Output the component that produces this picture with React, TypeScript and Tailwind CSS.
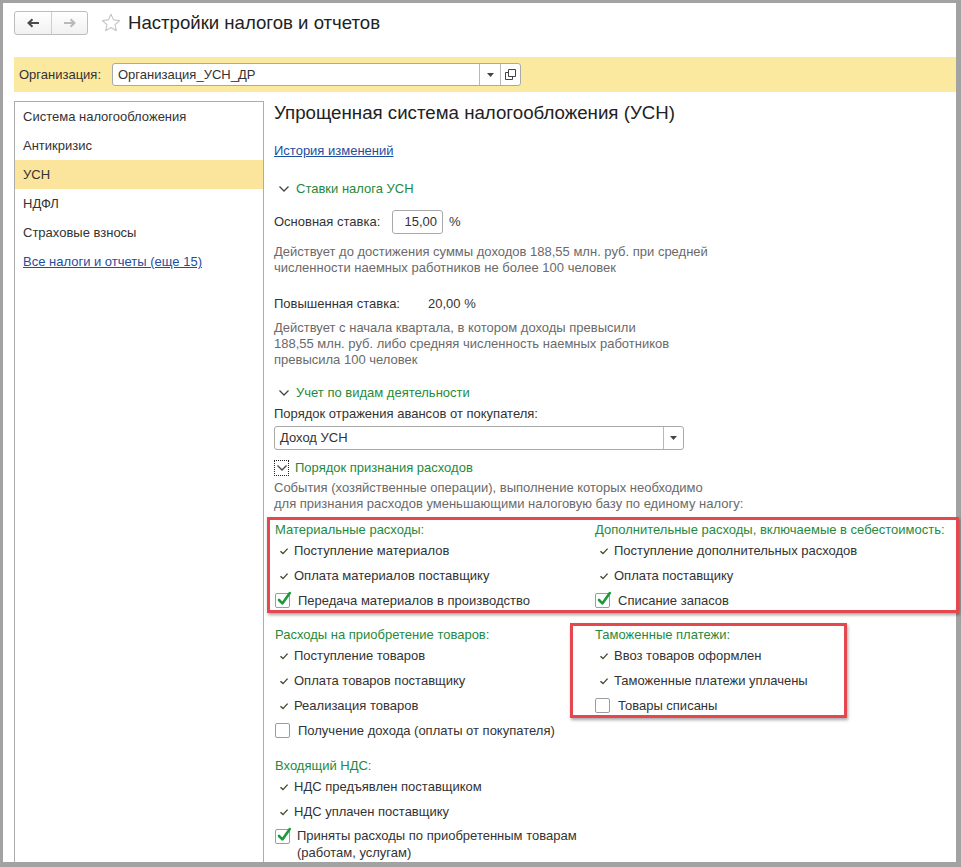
import React from 'react';

const green = 'text-[#1f8a3c]';

function Tick() {
  return (
    <svg width="10" height="8" viewBox="0 0 10 8" className="shrink-0">
      <path d="M1.5 4.2 L4 6.6 L8.6 1.6" fill="none" stroke="#474730" strokeWidth="1.4" />
    </svg>
  );
}

function Box({ checked }: { checked?: boolean }) {
  return (
    <span className="relative inline-block h-[15px] w-[15px] shrink-0 rounded-[2px] border border-[#9c9c9c] bg-white">
      {checked && (
        <svg className="absolute left-[1px] top-[-4px]" width="15" height="17" viewBox="0 0 15 17">
          <path d="M2 10 L5.4 13.4 L12.8 3" fill="none" stroke="#1c9a3b" strokeWidth="2.6" strokeLinecap="round" strokeLinejoin="round" />
        </svg>
      )}
    </span>
  );
}

function Chevron() {
  return (
    <svg width="12" height="8" viewBox="0 0 12 8" className="shrink-0">
      <path d="M1.5 1.5 L6 6 L10.5 1.5" fill="none" stroke="#3e4a3e" strokeWidth="1.3" />
    </svg>
  );
}

function TickRow({ text }: { text: string }) {
  return (
    <div className="flex h-[25px] items-center pl-[5px]">
      <Tick />
      <span className="ml-[5px]">{text}</span>
    </div>
  );
}

function BoxRow({ text, checked }: { text: string; checked?: boolean }) {
  return (
    <div className="flex h-[25px] items-center pl-[1px]">
      <Box checked={checked} />
      <span className="ml-[8px]">{text}</span>
    </div>
  );
}

function GroupHead({ text }: { text: string }) {
  return <div className={`h-[16px] pl-[1px] leading-[16px] ${green}`}>{text}</div>;
}

const menu = ['Система налогообложения', 'Антикризис', 'УСН', 'НДФЛ', 'Страховые взносы'];

export default function App() {
  return (
    <div className="relative h-[867px] w-[961px] bg-[#a2a2a2] pb-[5px] pl-[3px] pr-[5px] pt-[3px] font-['Liberation_Sans',Arial,sans-serif] text-[13px] text-[#333]">
      <div className="flex h-full flex-col overflow-hidden bg-white">
        {/* header */}
        <div className="flex h-[54px] shrink-0 items-start pl-[11px] pt-[8px]">
          <div className="flex h-[24px] overflow-hidden rounded-[3px] border border-[#bdbdbd] bg-gradient-to-b from-white to-[#f1f1f1]">
            <div className="flex w-[37px] items-center justify-center border-r border-[#cfcfcf]">
              <svg width="14" height="10" viewBox="0 0 14 10">
                <path d="M13 5 H3 M6.5 1.2 L2.5 5 L6.5 8.8" fill="none" stroke="#4b4b4b" strokeWidth="2" />
              </svg>
            </div>
            <div className="flex w-[35px] items-center justify-center">
              <svg width="14" height="10" viewBox="0 0 14 10">
                <path d="M1 5 H11 M7.5 1.2 L11.5 5 L7.5 8.8" fill="none" stroke="#b9b9b9" strokeWidth="2" />
              </svg>
            </div>
          </div>
          <svg className="ml-[12px] mt-[1px]" width="22" height="22" viewBox="0 0 24 24">
            <path
              d="M12 2.5 L14.8 8.6 L21.4 9.3 L16.4 13.8 L17.8 20.4 L12 17 L6.2 20.4 L7.6 13.8 L2.6 9.3 L9.2 8.6 Z"
              fill="none"
              stroke="#c4c4c4"
              strokeWidth="1.2"
              strokeLinejoin="round"
            />
          </svg>
          <div className="ml-[6px] h-[24px] text-[18.6px] leading-[24px] text-[#222]">Настройки налогов и отчетов</div>
        </div>

        {/* organization bar */}
        <div className="ml-[11px] flex h-[35px] shrink-0 items-center bg-[#fce9a0] pl-[5px]">
          <span className="w-[93px]">Организация:</span>
          <div className="flex h-[23px] w-[409px] overflow-hidden rounded-[3px] border border-[#a9a9a9] bg-white">
            <div className="flex flex-1 items-center pl-[5px]">Организация_УСН_ДР</div>
            <div className="flex w-[21px] items-center justify-center border-l border-[#b9b9b9]">
              <svg width="7" height="4" viewBox="0 0 7 4">
                <path d="M0 0 H7 L3.5 4 Z" fill="#444" />
              </svg>
            </div>
            <div className="flex w-[20px] items-center justify-center border-l border-[#b9b9b9]">
              <svg width="11" height="11" viewBox="0 0 11 11">
                <path d="M3.5 0.5 H10.5 V7.5 H3.5 Z" fill="none" stroke="#444" strokeWidth="1" />
                <path d="M3.5 3.5 H0.5 V10.5 H7.5 V7.5" fill="none" stroke="#444" strokeWidth="1" />
              </svg>
            </div>
          </div>
        </div>

        {/* body */}
        <div className="mt-[9px] flex min-h-0 flex-1">
          <div className="ml-[11px] w-[250px] shrink-0 border border-b-0 border-[#acacac]">
            {menu.map((m) => (
              <div key={m} className={`flex h-[29px] items-center pl-[8px] ${m === 'УСН' ? 'bg-[#fbe49c]' : ''}`}>
                {m}
              </div>
            ))}
            <div className="flex h-[29px] items-center pl-[8px]">
              <span className="text-[#1f4ea0] underline">Все налоги и отчеты (еще 15)</span>
            </div>
          </div>

          <div className="min-w-0 flex-1 pl-[10px]">
            <div className="h-[24px] text-[18.7px] leading-[24px] text-[#222]">Упрощенная система налогообложения (УСН)</div>
            <div className="mt-[16px] flex h-[20px] items-center">
              <span className="text-[#1f4ea0] underline">История изменений</span>
            </div>

            <div className={`mt-[18px] flex h-[20px] items-center pl-[4px] ${green}`}>
              <Chevron />
              <span className="ml-[6px]">Ставки налога УСН</span>
            </div>

            <div className="mt-[11px] flex h-[24px] items-center">
              <span className="w-[118px]">Основная ставка:</span>
              <div className="flex h-[24px] w-[51px] items-center justify-end rounded-[3px] border border-[#a9a9a9] pr-[5px]">15,00</div>
              <span className="ml-[6px]">%</span>
            </div>
            <div className="mt-[10px] leading-[16px] text-[#6a6a6a]">
              Действует до достижения суммы доходов 188,55 млн. руб. при средней
              <br />
              численности наемных работников не более 100 человек
            </div>

            <div className="mt-[18px] flex h-[20px] items-center">
              <span className="w-[154px]">Повышенная ставка:</span>
              <span>20,00 %</span>
            </div>
            <div className="mt-[6px] leading-[16px] text-[#6a6a6a]">
              Действует с начала квартала, в котором доходы превысили
              <br />
              188,55 млн. руб. либо средняя численность наемных работников
              <br />
              превысила 100 человек
            </div>

            <div className={`mt-[15px] flex h-[20px] items-center pl-[4px] ${green}`}>
              <Chevron />
              <span className="ml-[6px]">Учет по видам деятельности</span>
            </div>
            <div className="mt-[1px] flex h-[20px] items-center">Порядок отражения авансов от покупателя:</div>
            <div className="mt-[2px] flex h-[24px] w-[410px] overflow-hidden rounded-[3px] border border-[#a9a9a9]">
              <div className="flex flex-1 items-center pl-[5px]">Доход УСН</div>
              <div className="flex w-[20px] items-center justify-center border-l border-[#b9b9b9]">
                <svg width="7" height="4" viewBox="0 0 7 4">
                  <path d="M0 0 H7 L3.5 4 Z" fill="#444" />
                </svg>
              </div>
            </div>

            <div className={`mt-[9px] flex h-[18px] items-center ${green}`}>
              <span className="flex h-[16px] w-[15px] items-center justify-center border border-dotted border-[#222]">
                <Chevron />
              </span>
              <span className="ml-[6px]">Порядок признания расходов</span>
            </div>
            <div className="mt-[3px] leading-[16px] text-[#6a6a6a]">
              События (хозяйственные операции), выполнение которых необходимо
              <br />
              для признания расходов уменьшающими налоговую базу по единому налогу:
            </div>

            <div className="mt-[10px] grid grid-cols-[320px_1fr]">
              <div>
                <GroupHead text="Материальные расходы:" />
                <TickRow text="Поступление материалов" />
                <TickRow text="Оплата материалов поставщику" />
                <BoxRow text="Передача материалов в производство" checked />
              </div>
              <div>
                <GroupHead text="Дополнительные расходы, включаемые в себестоимость:" />
                <TickRow text="Поступление дополнительных расходов" />
                <TickRow text="Оплата поставщику" />
                <BoxRow text="Списание запасов" checked />
              </div>
            </div>

            <div className="mt-[14px] grid grid-cols-[320px_1fr]">
              <div>
                <GroupHead text="Расходы на приобретение товаров:" />
                <TickRow text="Поступление товаров" />
                <TickRow text="Оплата товаров поставщику" />
                <TickRow text="Реализация товаров" />
                <BoxRow text="Получение дохода (оплаты от покупателя)" />
              </div>
              <div>
                <GroupHead text="Таможенные платежи:" />
                <TickRow text="Ввоз товаров оформлен" />
                <TickRow text="Таможенные платежи уплачены" />
                <BoxRow text="Товары списаны" />
              </div>
            </div>

            <div className="mt-[15px]">
              <GroupHead text="Входящий НДС:" />
              <TickRow text="НДС предъявлен поставщиком" />
              <TickRow text="НДС уплачен поставщику" />
              <div className="flex items-start pl-[1px] pt-[3px]">
                <span className="mt-[2px]">
                  <Box checked />
                </span>
                <span className="ml-[7px] leading-[17px]">
                  Приняты расходы по приобретенным товарам
                  <br />
                  (работам, услугам)
                </span>
              </div>
            </div>
          </div>
        </div>
      </div>

      {/* highlight frames */}
      <div className="absolute left-[267px] top-[517px] h-[96px] w-[692px] border-[3px] border-[#e6474f] shadow-[1px_2px_3px_rgba(0,0,0,0.35)]" />
      <div className="absolute left-[570px] top-[623px] h-[95px] w-[277px] border-[3px] border-[#e6474f] shadow-[1px_2px_3px_rgba(0,0,0,0.35)]" />
    </div>
  );
}
